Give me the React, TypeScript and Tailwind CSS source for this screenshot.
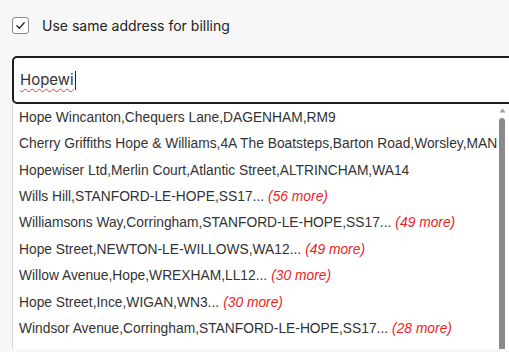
const rows: { text: string; more?: number }[] = [
  { text: "Hope Wincanton,Chequers Lane,DAGENHAM,RM9" },
  { text: "Cherry Griffiths Hope & Williams,4A The Boatsteps,Barton Road,Worsley,MANCHESTER,M30" },
  { text: "Hopewiser Ltd,Merlin Court,Atlantic Street,ALTRINCHAM,WA14" },
  { text: "Wills Hill,STANFORD-LE-HOPE,SS17...", more: 56 },
  { text: "Williamsons Way,Corringham,STANFORD-LE-HOPE,SS17...", more: 49 },
  { text: "Hope Street,NEWTON-LE-WILLOWS,WA12...", more: 49 },
  { text: "Willow Avenue,Hope,WREXHAM,LL12...", more: 30 },
  { text: "Hope Street,Ince,WIGAN,WN3...", more: 30 },
  { text: "Windsor Avenue,Corringham,STANFORD-LE-HOPE,SS17...", more: 28 },
];

export default function App() {
  return (
    <div className="w-[509px] h-[352px] overflow-hidden bg-[#f7f7f7]">
      <label className="flex items-center gap-[13px] pl-3 pt-[11px] h-[29px] box-content font-['Inter',sans-serif] text-[14px] text-[#222]">
        <span className="w-[17px] h-[17px] rounded-[3px] border border-[#8a8a8a] bg-white flex items-center justify-center">
          <svg width="11" height="11" viewBox="0 0 12 12" fill="none">
            <path d="M2 6.3 L4.8 9 L10 3" stroke="#222" strokeWidth="1.4" strokeLinecap="round" strokeLinejoin="round" />
          </svg>
        </span>
        Use same address for billing
      </label>

      <div className="pl-3 mt-[16px]">
        <div className="w-[504px] h-[48px] border-2 border-[#1e1e1e] rounded-[5px] bg-white flex items-center pl-[6px] font-['Inter',sans-serif] text-[15px] text-[#333]">
          <span className="underline decoration-wavy decoration-[#e04040] decoration-1 underline-offset-[3px]">Hopewi</span>
          <span className="w-px h-[19px] bg-[#222] ml-[1px]" />
        </div>

        <div className="flex h-[245px] bg-white border-l border-[#d6d6d6]">
          <ul className="flex-1 min-w-0 overflow-hidden pt-[1px] font-['Liberation_Sans',Arial,sans-serif] text-[13.8px] text-[#333]">
            {rows.map((r, i) => (
              <li key={i} className="h-[26.4px] flex items-center pl-[6px] whitespace-nowrap">
                {r.text}
                {r.more !== undefined && (
                  <span className="italic text-[#e8231f] ml-[4px]">({r.more} more)</span>
                )}
              </li>
            ))}
          </ul>
          <div className="w-[10px] flex flex-col items-center pt-[4px] mr-[2px]">
            <svg width="7" height="5" viewBox="0 0 7 5">
              <path d="M3.5 0.5 L6.5 4.5 L0.5 4.5 Z" fill="#9a9a9a" />
            </svg>
            <div className="mt-[5px] w-[6px] flex-1 rounded-t-[3px] bg-[#8a8a8a]" />
          </div>
        </div>
      </div>
    </div>
  );
}
